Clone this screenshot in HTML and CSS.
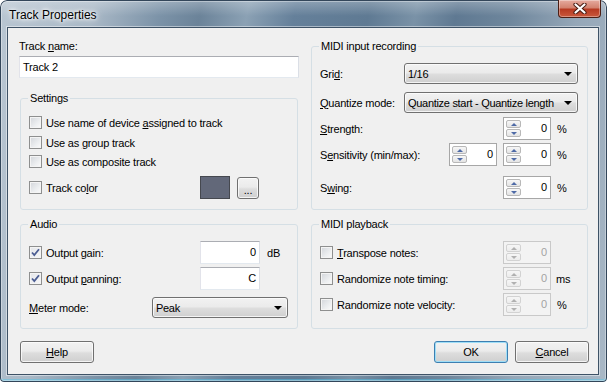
FILE: index.html
```html
<!DOCTYPE html>
<html lang="en">
<head>
    <meta charset="UTF-8">
    <title>Track Properties</title>
    <link rel="stylesheet" href="styles.css">
</head>
<body>
    <div class="window">
        <div class="titlebar">
            <span class="title">Track Properties</span>
            <div class="close">
                <svg width="14" height="11" viewBox="0 0 14 11">
                    <path d="M2.5 1.5 L11.5 9.5 M11.5 1.5 L2.5 9.5" stroke="#4a1d14" stroke-width="4.2" stroke-linecap="round"/>
                    <path d="M2.5 1.5 L11.5 9.5 M11.5 1.5 L2.5 9.5" stroke="#fff" stroke-width="2.2" stroke-linecap="round"/>
                </svg>
            </div>
        </div>

        <div class="client">
            <div class="columns">
                <div class="col col-left">
                    <div class="field-label">Track <u>n</u>ame:</div>
                    <div class="textbox">Track 2</div>

                    <div class="group group-settings">
                        <div class="caption">Settings</div>
                        <div class="row check-row s1">
                            <span class="check"></span>
                            <span>Use name of device <u>a</u>ssigned to track</span>
                        </div>
                        <div class="row check-row s2">
                            <span class="check"></span>
                            <span>Use as <u>g</u>roup track</span>
                        </div>
                        <div class="row check-row s3">
                            <span class="check"></span>
                            <span>Use as composite track</span>
                        </div>
                        <div class="row s4">
                            <span class="check"></span>
                            <span class="label">Track co<u>l</u>or</span>
                            <span class="swatch"></span>
                            <span class="btn btn-small">...</span>
                        </div>
                    </div>

                    <div class="group group-audio">
                        <div class="caption">Audio</div>
                        <div class="row a1">
                            <span class="check checked">
                                <svg width="11" height="11" viewBox="0 0 11 11"><path d="M2 5.5 L4.3 8 L9 2.2" fill="none" stroke="#4b5d92" stroke-width="1.8"/></svg>
                            </span>
                            <span class="label">Output <u>g</u>ain:</span>
                            <span class="textbox num">0</span>
                            <span class="unit">dB</span>
                        </div>
                        <div class="row a2">
                            <span class="check checked">
                                <svg width="11" height="11" viewBox="0 0 11 11"><path d="M2 5.5 L4.3 8 L9 2.2" fill="none" stroke="#4b5d92" stroke-width="1.8"/></svg>
                            </span>
                            <span class="label">Output <u>p</u>anning:</span>
                            <span class="textbox num">C</span>
                            <span class="unit"></span>
                        </div>
                        <div class="row a3">
                            <span class="label"><u>M</u>eter mode:</span>
                            <span class="combo combo-meter"><span class="combo-text">Peak</span><span class="arrow"></span></span>
                        </div>
                    </div>
                </div>

                <div class="col col-right">
                    <div class="group group-input">
                        <div class="caption">MIDI input recording</div>
                        <div class="row m1">
                            <span class="label">Gri<u>d</u>:</span>
                            <span class="combo"><span class="combo-text">1/16</span><span class="arrow"></span></span>
                        </div>
                        <div class="row m2">
                            <span class="label"><u>Q</u>uantize mode:</span>
                            <span class="combo"><span class="combo-text">Quantize start - Quantize length</span><span class="arrow"></span></span>
                        </div>
                        <div class="row m3">
                            <span class="label"><u>S</u>trength:</span>
                            <span class="spin"><span class="spin-btns"><span class="spin-btn up"></span><span class="spin-btn down"></span></span><span class="spin-value">0</span></span>
                            <span class="unit">%</span>
                        </div>
                        <div class="row m4">
                            <span class="label">S<u>e</u>nsitivity (min/max):</span>
                            <span class="spin spin-min"><span class="spin-btns"><span class="spin-btn up"></span><span class="spin-btn down"></span></span><span class="spin-value">0</span></span>
                            <span class="spin"><span class="spin-btns"><span class="spin-btn up"></span><span class="spin-btn down"></span></span><span class="spin-value">0</span></span>
                            <span class="unit">%</span>
                        </div>
                        <div class="row m5">
                            <span class="label">S<u>w</u>ing:</span>
                            <span class="spin"><span class="spin-btns"><span class="spin-btn up"></span><span class="spin-btn down"></span></span><span class="spin-value">0</span></span>
                            <span class="unit">%</span>
                        </div>
                    </div>

                    <div class="group group-playback">
                        <div class="caption">MIDI playback</div>
                        <div class="row p1">
                            <span class="check"></span>
                            <span class="label"><u>T</u>ranspose notes:</span>
                            <span class="spin off"><span class="spin-btns"><span class="spin-btn up"></span><span class="spin-btn down"></span></span><span class="spin-value">0</span></span>
                            <span class="unit"></span>
                        </div>
                        <div class="row p2">
                            <span class="check"></span>
                            <span class="label">Randomize note timing:</span>
                            <span class="spin off"><span class="spin-btns"><span class="spin-btn up"></span><span class="spin-btn down"></span></span><span class="spin-value">0</span></span>
                            <span class="unit">ms</span>
                        </div>
                        <div class="row p3">
                            <span class="check"></span>
                            <span class="label">Randomize note velocity:</span>
                            <span class="spin off"><span class="spin-btns"><span class="spin-btn up"></span><span class="spin-btn down"></span></span><span class="spin-value">0</span></span>
                            <span class="unit">%</span>
                        </div>
                    </div>
                </div>
            </div>

            <div class="buttons">
                <span class="btn"><u>H</u>elp</span>
                <span class="spacer"></span>
                <span class="btn btn-default">OK</span>
                <span class="btn"><u>C</u>ancel</span>
            </div>
        </div>
    </div>
</body>
</html>
```

FILE: styles.css
```css
* {
    margin: 0;
    padding: 0;
    box-sizing: border-box;
}

body {
    width: 607px;
    height: 382px;
    overflow: hidden;
    font-family: "Liberation Sans", Arial, sans-serif;
    font-size: 11px;
    letter-spacing: -0.2px;
    color: #000;
    background: #fff;
}

u {
    text-decoration: underline;
    text-underline-offset: 1px;
}

/* window frame (Vista glass) */
.window {
    width: 607px;
    height: 382px;
    display: flex;
    flex-direction: column;
    border-radius: 7px 7px 4px 4px;
    overflow: hidden;
    background:
        linear-gradient(180deg, rgba(255, 255, 255, 0.28) 0, rgba(255, 255, 255, 0) 16px),
        linear-gradient(100deg, #b9c6d2 0%, #aab9c7 14%, #7c93a8 24%, #6b8399 30%, #8ba1b4 37%, #65809a 44%, #5f7a93 55%, #7a92a7 62%, #5f7992 68%, #6e869c 76%, #95a7b8 86%, #a9b8c6 100%);
    box-shadow:
        inset 0 0 0 1px #33465a,
        inset 0 0 0 2px rgba(255, 255, 255, 0.35),
        inset 0 -3px 0 rgba(80, 200, 235, 0.45);
}

.titlebar {
    height: 27px;
    display: flex;
    align-items: flex-start;
    justify-content: space-between;
}

.title {
    padding: 8px 0 0 9px;
    font-size: 12px;
    line-height: 14px;
    letter-spacing: 0;
    color: #000;
    text-shadow: 0 0 8px #fff, 0 0 5px #fff, 0 0 3px rgba(255, 255, 255, 0.9);
}

.close {
    width: 43px;
    height: 18px;
    margin-right: 6px;
    display: flex;
    align-items: center;
    justify-content: center;
    border: 1px solid #4c1e14;
    border-top: none;
    border-radius: 0 0 4px 4px;
    background: linear-gradient(180deg, #e6ab9f 0%, #d3826f 45%, #b73a22 55%, #c9583c 100%);
    box-shadow: inset 0 0 0 1px rgba(255, 255, 255, 0.35);
}

/* client area */
.client {
    height: 348px;
    margin: 0 8px 0 7px;
    padding: 0 9px 0 11px;
    display: flex;
    flex-direction: column;
    background: #f0f0f0;
    border: 1px solid #3e5266;
    box-shadow: 0 0 0 1px rgba(255, 255, 255, 0.45);
}

.columns {
    display: grid;
    grid-template-columns: 280px 278px;
    column-gap: 12px;
}

.col {
    display: flex;
    flex-direction: column;
}

.col-left {
    padding-top: 12px;
}

.col-right {
    padding-top: 18px;
}

.field-label {
    line-height: 13px;
}

.textbox {
    height: 22px;
    padding: 0 2px;
    line-height: 20px;
    background: #fff;
    border: 1px solid;
    border-color: #abadb3 #dbdfe6 #e3e9ef #e2e3ea;
}

.col-left > .textbox {
    margin-top: 3px;
    padding-left: 3px;
}

.textbox.num {
    width: 60px;
    height: 23px;
    line-height: 21px;
    text-align: right;
    padding-right: 3px;
}

/* group boxes */
.group {
    border: 1px solid #d5dfe5;
    border-radius: 3px;
    padding: 0 8px;
}

.col-left .group {
    margin-left: 1px;
    margin-right: 1px;
}

.col-right .group {
    margin-right: 1px;
}

.group-settings {
    margin-top: 20px;
    height: 112px;
}

.group-audio {
    margin-top: 14px;
    height: 105px;
}

.group-input {
    height: 164px;
}

.group-playback {
    margin-top: 14px;
    height: 105px;
}

.caption {
    width: fit-content;
    margin: -7px 0 0 -1px;
    padding: 0 2px;
    line-height: 13px;
    background: #f0f0f0;
}

.row {
    display: flex;
    align-items: center;
}

.row .label {
    flex: 1;
}

.check-row {
    height: 13px;
}

.s1 { margin-top: 11px; }
.s2 { margin-top: 7px; }
.s3 { margin-top: 6px; }
.s4 { margin-top: 8px; height: 23px; padding-right: 30px; }

.a1 { margin-top: 10px; height: 23px; }
.a2 { margin-top: 3px; height: 23px; }
.a3 { margin-top: 7px; height: 21px; }

.m1 { margin-top: 10px; height: 21px; }
.m2 { margin-top: 8px; height: 21px; }
.m3 { margin-top: 4px; height: 23px; }
.m4 { margin-top: 3px; height: 23px; }
.m5 { margin-top: 10px; height: 23px; }

.p1 { margin-top: 10px; height: 23px; }
.p2 { margin-top: 3px; height: 23px; }
.p3 { margin-top: 3px; height: 23px; }

.unit {
    width: 28px;
    padding-left: 6px;
}

.a1 .unit,
.a2 .unit {
    width: 29px;
    padding-left: 7px;
}

.p2 .unit {
    padding-left: 5px;
}

/* checkbox */
.check {
    width: 13px;
    height: 13px;
    flex: none;
    margin-right: 4px;
    display: flex;
    align-items: center;
    justify-content: center;
    border: 1px solid #8e8f8f;
    background: linear-gradient(135deg, #d2d5da 0%, #eceef0 60%, #fbfbfb 100%);
    box-shadow: inset 0 0 0 1px #f4f4f4;
}

.check.checked {
    background: linear-gradient(135deg, #e4e6ea 0%, #f6f6f7 100%);
}

.swatch {
    width: 30px;
    height: 23px;
    margin-right: 7px;
    background: #626879;
    border: 1px solid #45484f;
}

/* push buttons */
.btn {
    width: 74px;
    height: 22px;
    display: flex;
    align-items: center;
    justify-content: center;
    border: 1px solid #707070;
    border-radius: 3px;
    background: linear-gradient(180deg, #f2f2f2 0%, #ebebeb 45%, #dddddd 55%, #cfcfcf 100%);
    box-shadow: inset 0 0 0 1px rgba(252, 252, 252, 0.8);
}

.btn-small {
    width: 22px;
    height: 22px;
    padding-top: 4px;
}

.btn-default {
    border-color: #3c7fb1;
    box-shadow: inset 0 0 0 1px #9fdef7;
    margin-right: 7px;
}

.buttons {
    display: flex;
    margin-top: 12px;
    padding-left: 1px;
}

.spacer {
    flex: 1;
}

/* combo boxes */
.combo {
    width: 174px;
    height: 21px;
    margin-right: 1px;
    display: flex;
    align-items: center;
    padding: 0 5px 0 3px;
    border: 1px solid #707070;
    border-radius: 3px;
    background: linear-gradient(180deg, #f2f2f2 0%, #ebebeb 45%, #dddddd 55%, #cfcfcf 100%);
    box-shadow: inset 0 0 0 1px rgba(252, 252, 252, 0.8);
}

.combo-meter {
    width: 136px;
}

.combo-text {
    flex: 1;
    white-space: nowrap;
    letter-spacing: -0.3px;
}

.arrow {
    width: 0;
    height: 0;
    border-left: 4px solid transparent;
    border-right: 4px solid transparent;
    border-top: 4px solid #000;
}

/* spin boxes */
.spin {
    width: 48px;
    height: 23px;
    flex: none;
    display: flex;
    align-items: center;
    padding: 2px 3px 2px 2px;
    background: #fff;
    border: 1px solid #a7a7a7;
}

.spin-min {
    margin-right: 6px;
}

.spin-btns {
    width: 15px;
    height: 17px;
    display: flex;
    flex-direction: column;
    gap: 1px;
}

.spin-btn {
    flex: 1;
    display: flex;
    align-items: center;
    justify-content: center;
    border: 1px solid #b8b8b8;
    border-radius: 2px;
    background: linear-gradient(180deg, #f7f7f7 0%, #e4e4e4 100%);
}

.spin-btn.up::before {
    content: "";
    border-left: 3px solid transparent;
    border-right: 3px solid transparent;
    border-bottom: 3px solid #4e6aa6;
}

.spin-btn.down::before {
    content: "";
    border-left: 3px solid transparent;
    border-right: 3px solid transparent;
    border-top: 3px solid #4e6aa6;
}

.spin-value {
    flex: 1;
    text-align: right;
    line-height: 13px;
}

.spin.off {
    background: #f3f3f3;
    border-color: #c9c9c9;
    color: #a3a3a3;
}

.spin.off .spin-btn {
    border-color: #d2d2d2;
    background: linear-gradient(180deg, #f6f6f6 0%, #ececec 100%);
}

.spin.off .spin-btn.up::before {
    border-bottom-color: #b0b0b0;
}

.spin.off .spin-btn.down::before {
    border-top-color: #b0b0b0;
}
```
